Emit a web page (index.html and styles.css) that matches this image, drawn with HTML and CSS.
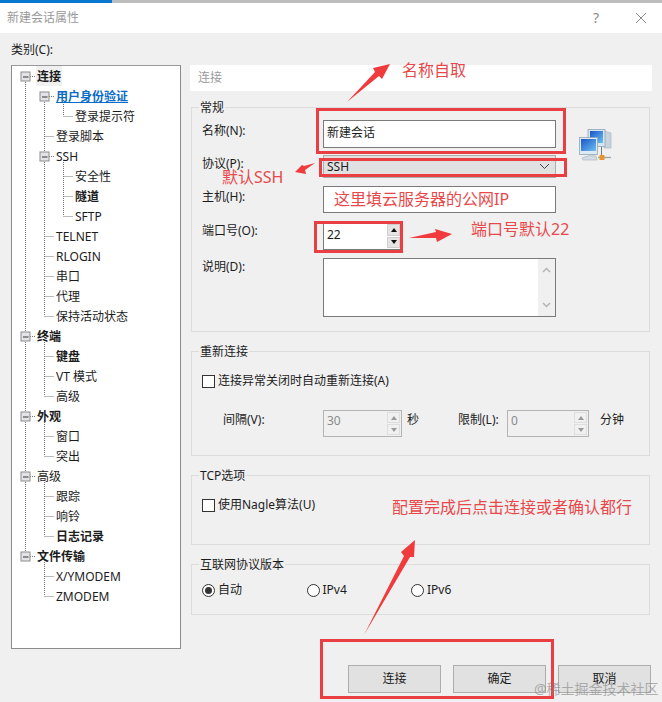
FILE: index.html
```html
<!DOCTYPE html>
<html lang="zh-CN">
<head>
<meta charset="utf-8">
<title>新建会话属性</title>
<link rel="stylesheet" href="styles.css">
</head>
<body>
<div class="dialog">
  <div class="strip"><span class="strip-blue"></span></div>
  <header class="titlebar">
    <span class="title">新建会话属性</span>
    <span class="help">?</span>
    <svg class="close" width="12" height="12" viewBox="0 0 12 12"><path d="M1 1L11 11M11 1L1 11" stroke="#8a8a8a" fill="none"/></svg>
  </header>

  <div class="body">
    <aside class="side">
      <div class="side-label">类别(C):</div>
      <div class="tree">
        <svg class="tree-lines" width="170" height="584" viewBox="11 65 170 584">
          <defs>
            <g id="ex">
              <rect x="-4.5" y="-4.5" width="9" height="9" fill="#e4e4e8" stroke="#8c8c8c"/>
              <path d="M-2.5 0.5H3" stroke="#333" fill="none"/>
            </g>
          </defs>
          <path fill="none" stroke="#777" stroke-dasharray="1 1" d="M25.5 80V556M30 76.5H35M30 336.5H35M30 416.5H35M30 476.5H35M30 556.5H35
            M44.5 100V316M49 96.5H54M44.5 136.5H54M49 156.5H54M44.5 236.5H54M44.5 256.5H54M44.5 276.5H54M44.5 296.5H54M44.5 316.5H54
            M63.5 100V116M63.5 116.5H73M63.5 160V216M63.5 176.5H73M63.5 196.5H73M63.5 216.5H73
            M44.5 340V396M44.5 356.5H54M44.5 376.5H54M44.5 396.5H54
            M44.5 420V456M44.5 436.5H54M44.5 456.5H54
            M44.5 480V536M44.5 496.5H54M44.5 516.5H54M44.5 536.5H54
            M44.5 560V596M44.5 576.5H54M44.5 596.5H54"/>
          <use href="#ex" x="25.5" y="76.5"/>
          <use href="#ex" x="44.5" y="96.5"/>
          <use href="#ex" x="44.5" y="156.5"/>
          <use href="#ex" x="25.5" y="336.5"/>
          <use href="#ex" x="25.5" y="416.5"/>
          <use href="#ex" x="25.5" y="476.5"/>
          <use href="#ex" x="25.5" y="556.5"/>
        </svg>
        <div class="row l1"><b class="current">连接</b></div>
        <div class="row l2"><b class="link">用户身份验证</b></div>
        <div class="row l3">登录提示符</div>
        <div class="row l2">登录脚本</div>
        <div class="row l2">SSH</div>
        <div class="row l3">安全性</div>
        <div class="row l3"><b>隧道</b></div>
        <div class="row l3">SFTP</div>
        <div class="row l2">TELNET</div>
        <div class="row l2">RLOGIN</div>
        <div class="row l2">串口</div>
        <div class="row l2">代理</div>
        <div class="row l2">保持活动状态</div>
        <div class="row l1"><b>终端</b></div>
        <div class="row l2"><b>键盘</b></div>
        <div class="row l2">VT 模式</div>
        <div class="row l2">高级</div>
        <div class="row l1"><b>外观</b></div>
        <div class="row l2">窗口</div>
        <div class="row l2">突出</div>
        <div class="row l1">高级</div>
        <div class="row l2">跟踪</div>
        <div class="row l2">响铃</div>
        <div class="row l2"><b>日志记录</b></div>
        <div class="row l1"><b>文件传输</b></div>
        <div class="row l2">X/YMODEM</div>
        <div class="row l2">ZMODEM</div>
      </div>
    </aside>

    <main class="main">
      <div class="band">连接</div>

      <section class="group g-general">
        <span class="legend">常规</span>
        <div class="form">
          <label class="lbl">名称(N):</label>
          <div class="input h28">新建会话</div>
          <label class="lbl lbl-low">协议(P):</label>
          <div class="select">SSH
            <svg width="11" height="7" viewBox="0 0 11 7"><path d="M1 1L5.5 5.5L10 1" fill="none" stroke="#444"/></svg>
          </div>
          <label class="lbl">主机(H):</label>
          <div class="input h27"></div>
          <label class="lbl lbl-low">端口号(O):</label>
          <div class="spin w79 h28">
            <span class="spin-val">22</span>
            <span class="spin-btns"><i class="up"></i><i class="down"></i></span>
          </div>
          <label class="lbl lbl-low">说明(D):</label>
          <div class="textarea">
            <span class="scroll">
              <svg width="9" height="6" viewBox="0 0 9 6"><path d="M1 5L4.5 1.5L8 5" fill="none" stroke="#b5b5b5" stroke-width="1.5"/></svg>
              <svg width="9" height="6" viewBox="0 0 9 6"><path d="M1 1L4.5 4.5L8 1" fill="none" stroke="#b5b5b5" stroke-width="1.5"/></svg>
            </span>
          </div>
        </div>
        <svg class="net-icon" width="34" height="32" viewBox="0 0 34 32">
          <defs>
            <linearGradient id="scr" x1="0" y1="0" x2="1" y2="1"><stop offset="0" stop-color="#1a55c8"/><stop offset="1" stop-color="#6cc0ee"/></linearGradient>
          </defs>
          <path d="M25 2L32 4V19L25 19Z" fill="#c8d4dc" stroke="#9fb0bc" stroke-width=".6"/>
          <rect x="9" y="0.500" width="17" height="17" fill="#d8e4ee" stroke="#8fa6b8" stroke-width=".8"/>
          <rect x="11" y="2" width="13" height="12" fill="url(#scr)"/>
          <rect x="0.500" y="8.500" width="18" height="17" fill="#dfe9f1" stroke="#8fa6b8" stroke-width=".8"/>
          <rect x="2" y="10" width="15" height="12" fill="url(#scr)"/>
          <path d="M3 29Q10 25.500 17 27L18 31H4Z" fill="#d4dde4" stroke="#9fb0bc" stroke-width=".6"/>
          <path d="M22.500 18V26" stroke="#777" stroke-width="1"/>
          <path d="M19 28.500H32" stroke="#9aa8b4" stroke-width="1.400"/>
          <rect x="20.500" y="26" width="5" height="5" fill="#e8952a"/>
        </svg>
      </section>

      <section class="group g-reconnect">
        <span class="legend">重新连接</span>
        <div class="check"><span class="box"></span>连接异常关闭时自动重新连接(A)</div>
        <div class="limits">
          <span class="lim-a">间隔(V):</span>
          <div class="spin off w79 h27">
            <span class="spin-val">30</span>
            <span class="spin-btns"><i class="up"></i><i class="down"></i></span>
          </div>
          <span class="lim-b">秒</span>
          <span class="lim-c">限制(L):</span>
          <div class="spin off w82 h27">
            <span class="spin-val">0</span>
            <span class="spin-btns"><i class="up"></i><i class="down"></i></span>
          </div>
          <span class="lim-d">分钟</span>
        </div>
      </section>

      <section class="group g-tcp">
        <span class="legend">TCP选项</span>
        <div class="check"><span class="box"></span>使用Nagle算法(U)</div>
      </section>

      <section class="group g-ip">
        <span class="legend">互联网协议版本</span>
        <div class="radios">
          <span class="radio"><i class="dot on"></i>自动</span>
          <span class="radio"><i class="dot"></i>IPv4</span>
          <span class="radio"><i class="dot"></i>IPv6</span>
        </div>
      </section>

      <footer class="buttons">
        <button class="btn">连接</button>
        <button class="btn">确定</button>
        <button class="btn">取消</button>
      </footer>
    </main>
  </div>

  <svg class="marks" width="662" height="702" viewBox="0 0 662 702">
    <g fill="none" stroke="#ea3f42" stroke-width="3">
      <rect x="317.500" y="109.500" width="247" height="43"/>
      <rect x="320.500" y="159.500" width="245" height="16"/>
      <rect x="315.500" y="222.500" width="86" height="29"/>
      <rect x="321.500" y="640.500" width="231" height="57"/>
    </g>
    <g fill="#f03a3c">
      <polygon points="347,102 375,72 373,68 390,64 382,79 379,76"/>
      <polygon points="315,163 304,166 302,165 295,172 306,174 305,170"/>
      <polygon points="409,238 436,232 435,229 452,234 437,242 436,238"/>
      <polygon points="364,635 404,556 401,552 415,540 414,557 410,557"/>
    </g>
  </svg>
  <span class="note n-name">名称自取</span>
  <span class="note n-ssh">默认SSH</span>
  <span class="note n-host">这里填云服务器的公网IP</span>
  <span class="note n-port">端口号默认22</span>
  <span class="note n-done">配置完成后点击连接或者确认都行</span>
  <span class="watermark">@稀土掘金技术社区</span>
</div>
</body>
</html>
```
FILE: styles.css
```css
* { box-sizing: border-box; }
html, body { margin: 0; padding: 0; }
body {
  width: 662px;
  height: 702px;
  overflow: hidden;
  background: #f0f0f0;
  color: #1c1c1c;
  font: 12px/18px "Noto Sans", "Noto Sans CJK SC", sans-serif;
}
.dialog { position: relative; width: 662px; height: 702px; background: #f0f0f0; }

.strip { height: 3px; background: #bdbdbd; }
.strip-blue { display: block; width: 112px; height: 3px; background: #0a78cf; }

.titlebar {
  display: flex;
  align-items: center;
  height: 30px;
  padding: 0 15px 0 7px;
  background: #fff;
}
.title { flex: 1; color: #9a9a9a; }
.help { margin-right: 36px; color: #8a8a8a; font-size: 14px; }
.close { display: block; }

.body { display: flex; padding: 8px 0 0 11px; gap: 9px; }

.side { width: 170px; flex: none; }
.side-label { height: 18px; margin-bottom: 6px; }
.tree {
  position: relative;
  height: 584px;
  background: #fff;
  border: 1px solid #8c8c8c;
  border-top-color: #999;
}
.tree-lines { position: absolute; left: -1px; top: -1px; }
.row { position: relative; height: 20px; line-height: 22px; white-space: nowrap; }
.l1 { padding-left: 25px; }
.l2 { padding-left: 44px; }
.l3 { padding-left: 63px; }
.row b { font-weight: 700; }
.current { display: inline-block; background: #f0f0f0; padding: 0 1px; margin-left: -1px; height: 20px; }
.link { color: #0a6cc4; text-decoration: underline; }

.main { width: 462px; flex: none; padding-top: 24px; }
.band {
  height: 26px;
  line-height: 26px;
  padding-left: 8px;
  background: #fff;
  color: #9a9a9a;
}

.group {
  position: relative;
  width: 459px;
  margin-left: 1px;
  border: 1px solid #dcdcdc;
}
.legend {
  position: absolute;
  left: 7px;
  top: -9px;
  padding: 0 1px;
  background: #f0f0f0;
}
.g-general { height: 225px; margin-top: 16px; padding: 12px 0 0 10px; }
.g-reconnect { height: 105px; margin-top: 19px; padding: 20px 0 0 10px; }
.g-tcp { height: 70px; margin-top: 19px; padding: 20px 0 0 10px; }
.g-ip { height: 51px; margin-top: 19px; padding: 16px 0 0 10px; }

.form {
  display: grid;
  grid-template-columns: 121px 233px;
  grid-template-rows: 35px 31px 36px 36px 59px;
}
.lbl { padding-top: 2px; }
.lbl-low { padding-top: 0; }
.input {
  background: #fff;
  border: 1px solid #7a7a7a;
  padding: 0 3px 3px;
  display: flex;
  align-items: center;
}
.h28 { height: 28px; }
.h27 { height: 27px; }
.select {
  height: 23px;
  background: #e1e1e1;
  border: 1px solid #adadad;
  padding: 0 5px 0 3px;
  display: flex;
  align-items: center;
  justify-content: space-between;
}
.spin {
  display: flex;
  align-items: stretch;
  background: #fff;
  border: 1px solid #7a7a7a;
}
.w79 { width: 79px; }
.w82 { width: 82px; }
.spin-val { flex: 1; padding: 0 0 3px 3px; align-self: center; }
.off .spin-val { padding-bottom: 6px; }
.spin-btns {
  width: 15px;
  padding: 1px 1px;
  display: flex;
  flex-direction: column;
  gap: 1px;
}
.spin-btns i {
  flex: 1;
  display: flex;
  align-items: center;
  justify-content: center;
  background: #e4e4e4;
  border: 1px solid #cfcfcf;
}
.spin-btns i::before {
  content: "";
  width: 0;
  height: 0;
  border-left: 3px solid transparent;
  border-right: 3px solid transparent;
}
.up::before { border-bottom: 4px solid #111; }
.down::before { border-top: 4px solid #111; }
.off { background: #f0f0f0; border-color: #b4b4b4; color: #8a8a8a; }
.off .spin-btns i { background: #f0f0f0; border-color: #dedede; }
.off .up::before { border-bottom-color: #9a9a9a; }
.off .down::before { border-top-color: #9a9a9a; }
.textarea {
  height: 59px;
  background: #fff;
  border: 1px solid #7a7a7a;
  display: flex;
  justify-content: flex-end;
}
.scroll {
  width: 17px;
  background: #f0f0f0;
  display: flex;
  flex-direction: column;
  align-items: center;
  justify-content: space-between;
  padding: 8px 0;
}
.scroll svg { display: block; }
.net-icon { position: absolute; left: 387px; top: 21px; }

.check { display: flex; align-items: center; gap: 3px; }
.box {
  width: 13px;
  height: 13px;
  background: #fff;
  border: 1px solid #333;
}
.limits { display: flex; align-items: flex-start; margin-top: 20px; padding-left: 21px; }
.lim-a { width: 100px; }
.lim-b { margin-left: 5px; width: 51px; }
.lim-c { width: 49px; }
.lim-d { margin-left: 11px; }
.limits > span { margin-top: 1px; }

.radios { display: flex; }
.radio { display: flex; align-items: center; gap: 3px; width: 104.500px; }
.dot {
  display: flex;
  align-items: center;
  justify-content: center;
  width: 13px;
  height: 13px;
  border: 1px solid #333;
  border-radius: 50%;
  background: #fff;
}
.dot.on::before {
  content: "";
  width: 7px;
  height: 7px;
  border-radius: 50%;
  background: #333;
}

.buttons { display: flex; gap: 12px; margin-top: 50px; padding-left: 158px; }
.btn {
  width: 93px;
  height: 28px;
  padding: 0;
  background: #e1e1e1;
  border: 1px solid #adadad;
  color: #1c1c1c;
  font: inherit;
}

.marks { position: absolute; left: 0; top: 0; pointer-events: none; }
.note {
  position: absolute;
  color: #e9484b;
  font-size: 16px;
  line-height: 20px;
  white-space: nowrap;
}
.n-name { left: 402px; top: 60px; }
.n-ssh { left: 222px; top: 167px; }
.n-host { left: 334px; top: 189px; }
.n-port { left: 471px; top: 219px; }
.n-done { left: 392px; top: 497px; }
.watermark {
  position: absolute;
  left: 534px;
  top: 679px;
  color: rgba(130, 130, 130, .6);
  font-size: 14px;
  line-height: 20px;
  white-space: nowrap;
}
```
